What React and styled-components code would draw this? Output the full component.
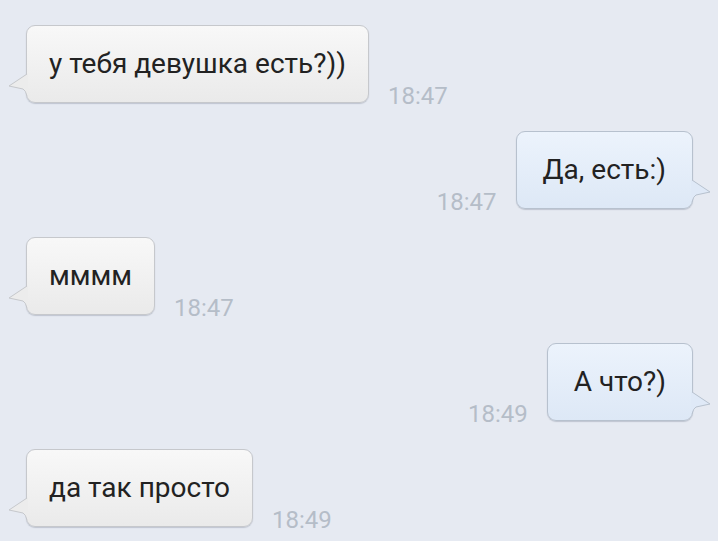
import React from 'react';
import styled, { createGlobalStyle } from 'styled-components';

const GlobalStyle = createGlobalStyle`
  html, body {
    margin: 0;
    padding: 0;
    background: #e6eaf2;
    overflow: hidden;
  }
  body {
    font-family: Roboto, "Noto Sans", "DejaVu Sans", sans-serif;
  }
`;

const Screen = styled.div`
  width: 718px;
  height: 541px;
  background: #e6eaf2;
  overflow: hidden;
`;

const List = styled.div`
  display: flex;
  flex-direction: column;
  gap: 28px;
  margin-top: -81px;
`;

const Row = styled.div`
  display: flex;
  align-items: flex-end;
  justify-content: ${(p) => (p.out ? 'flex-end' : 'flex-start')};
  padding: ${(p) => (p.out ? '0 25px 0 0' : '0 0 0 26px')};
  gap: 19px;
`;

const Bubble = styled.div`
  position: relative;
  box-sizing: border-box;
  height: 78px;
  display: flex;
  align-items: center;
  padding: ${(p) => (p.out ? '0 26px 2px 26px' : '0 22px 2px 22px')};
  border-radius: 9px;
  border: 1px solid ${(p) => (p.out ? '#b7c1ce' : '#c6c8cc')};
  background: ${(p) =>
    p.out
      ? 'linear-gradient(#ecf3fc, #dde8f6)'
      : 'linear-gradient(#f8f8f8, #eaeaea)'};
  box-shadow: 0 1px 1px rgba(120, 130, 145, 0.35);
  color: #222222;
  font-size: 28px;
  white-space: nowrap;
`;

const Tail = styled.svg`
  position: absolute;
  bottom: 5px;
  width: 20px;
  height: 24px;
  ${(p) => (p.out ? 'right: -19px; transform: scaleX(-1);' : 'left: -19px;')}
`;

const Time = styled.span`
  font-size: 24px;
  color: #b5bdc8;
  line-height: 1;
  margin-bottom: -5px;
  order: ${(p) => (p.out ? -1 : 1)};
`;

function BubbleTail({ out }) {
  const fill = out ? '#dfe9f7' : '#ececec';
  const stroke = out ? '#b7c1ce' : '#c6c8cc';
  return (
    <Tail out={out} viewBox="0 0 20 24">
      <path d="M21 0 L19 1 L1 13 L15 16 Q17.5 17 19 23 L21 23 Z" fill={fill} />
      <path d="M19 1 L1 13 L15 16 Q17.5 17 19 23" fill="none" stroke={stroke} strokeWidth="1" />
    </Tail>
  );
}

const messages = [
  { text: 'ну ладно', time: '18:46', out: false, hidden: true },
  { text: 'у тебя девушка есть?))', time: '18:47', out: false },
  { text: 'Да, есть:)', time: '18:47', out: true },
  { text: 'мммм', time: '18:47', out: false },
  { text: 'А что?)', time: '18:49', out: true },
  { text: 'да так просто', time: '18:49', out: false },
];

export default function App() {
  return (
    <Screen>
      <GlobalStyle />
      <List>
        {messages.map((m, i) => (
          <Row key={i} out={m.out}>
            <Bubble out={m.out} style={m.hidden ? { width: 300 } : undefined}>
              {m.hidden ? '' : m.text}
              <BubbleTail out={m.out} />
            </Bubble>
            {!m.hidden && <Time out={m.out}>{m.time}</Time>}
          </Row>
        ))}
      </List>
    </Screen>
  );
}
